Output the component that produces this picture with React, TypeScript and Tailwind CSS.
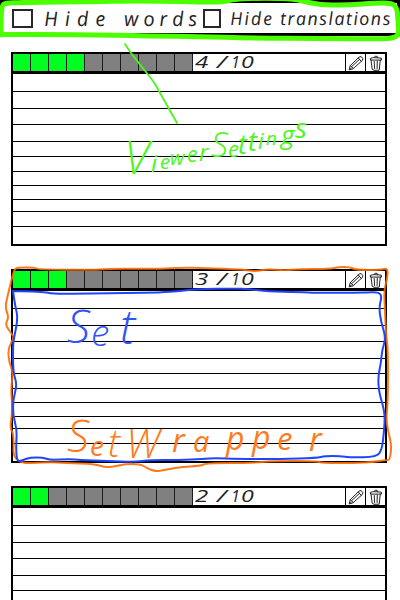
import React from "react";

type Glyph = [char: string, x: number, y: number, size: number];
type Point = [x: number, y: number];

const ROW_HEIGHTS = [
  "h-[18px]", "h-[17px]", "h-[16px]", "h-[17px]", "h-[15px]", "h-[15px]",
  "h-[14px]", "h-[14px]", "h-[12px]", "h-[15px]",
];

/* Smooth freehand stroke through a list of points. */
function stroke(points: Point[]) {
  let d = `M${points[0][0]} ${points[0][1]}`;
  for (let i = 1; i < points.length - 1; i++) {
    const [x, y] = points[i];
    const [nx, ny] = points[i + 1];
    d += ` Q${x} ${y} ${(x + nx) / 2} ${(y + ny) / 2}`;
  }
  const last = points[points.length - 1];
  return `${d} L${last[0]} ${last[1]}`;
}

/* Letters set one by one; large capitals get the light weight so the pen width stays even. */
function Lettering({ glyphs, color, stretch = 1 }: {
  glyphs: Glyph[]; color: string; stretch?: number;
}) {
  return (
    <text
      fill={color}
      fontFamily='"Open Sans", sans-serif'
      fontStyle="italic"
      transform={`scale(${stretch} 1)`}
    >
      {glyphs.map(([char, x, y, size], i) => (
        <tspan key={i} x={x / stretch} y={y} fontSize={size} fontWeight={size > 32 ? 300 : 400}>{char}</tspan>
      ))}
    </text>
  );
}

function Pencil() {
  return (
    <svg width="16" height="16" viewBox="0 0 16 16" fill="none" stroke="#222" strokeWidth="1" strokeLinejoin="round" strokeLinecap="round">
      <path d="M1.3 14.5 2.2 10.7 11.2 2 13.2 1.6 14.9 3.7 14.3 5.5 5.2 13.6Z" />
      <path d="M2.2 10.7 3.9 12 5.2 13.6M10.3 3 13.2 6.3M3.7 11.6 11.6 4.3M1.5 14 3 13.8" />
    </svg>
  );
}

function Trash() {
  return (
    <svg width="14" height="16" viewBox="0 0 14 16" fill="none" stroke="#222" strokeWidth="1" strokeLinejoin="round" strokeLinecap="round">
      <path d="M1.5 4.7 1.2 3.4 4.5 2.6 12.3 3.1 12.5 4.7ZM5 2.5 6.2 1.2 8.2 1.4 8.7 2.6" />
      <path d="M2 5 3.2 14.3 5 15.3 10.2 15.2 11.3 5M5.2 6.5 5.6 13.5M8.3 6 8.1 13.5" />
    </svg>
  );
}

function SetCard({ done }: { done: number }) {
  return (
    <section className="h-[194px] w-[376px] shrink-0 border-2 border-black bg-white">
      <header className="flex h-5 border-b-[3px] border-black">
        {Array.from({ length: 10 }, (_, i) => (
          <div key={i} className={`w-[18px] shrink-0 border-r border-[#1c1c1c] ${i < done ? "bg-[#00ff21]" : "bg-[#808080]"}`} />
        ))}
        <div className="flex flex-1 pl-[2px] font-['Open_Sans',sans-serif] text-[16px] leading-[17px] text-[#222] italic">
          <span className="inline-block w-[22px]"><span className="inline-block origin-left scale-x-[1.5]">{done}</span></span>
          <span className="inline-block w-[14px]"><span className="inline-block origin-left scale-x-[1.7]">/</span></span>
          <span className="inline-block w-[10px]">1</span>
          <span className="inline-block origin-left scale-x-[1.45]">0</span>
        </div>
        <div className="flex w-5 items-center justify-center border-l border-black"><Pencil /></div>
        <div className="flex w-5 items-center justify-center border-l border-black"><Trash /></div>
      </header>
      {ROW_HEIGHTS.map((height, i) => (
        <div key={i} className={`${height} border-b border-black`} />
      ))}
    </section>
  );
}

const BAR: Point[] = [[1,35],[1,18],[2,5],[6,3],[20,2.5],[60,2],[100,1.5],[120,1],[160,1],[200,2],[222,2],[235,-1],[265,-2],[295,-1],[310,3],[325,5],[350,5],[375,3],[392,3],[397,8],[398,20],[399,34],[394,38],[380,39],[320,38.5],[250,38],[200,36.5],[150,36],[80,34.5],[0,34.5]];

const BLUE_BOX: Point[] = [[13,291],[43,291.5],[53,294],[90,293.5],[128,293],[160,292.5],[180,291],[198,289],[233,288.5],[250,289],[267,291.5],[300,292],[317,293],[365,292.5],[378,292],[382,296],[379,307],[381,322],[386,338],[382,350],[381,363],[378,377],[379,392],[382,402],[385,415],[384,432],[382,449],[377,457],[350,457.5],[340,456],[325,456],[317,458],[280,459],[237,459],[215,458],[203,459],[180,460],[150,460],[135,462],[120,461.5],[95,460.5],[80,460],[70,459],[50,460],[43,457.5],[30,457.5],[23,460],[17,462],[16,447],[17,430],[13,415],[13,400],[17,385],[14,375],[13,365],[13,345],[14,338],[18,318],[15,305],[13,291]];

const ORANGE_BOX: Point[] = [[12,278],[14,270],[17,267.5],[35,267.5],[38,269.5],[97,270],[110,268.5],[160,269],[180,267.5],[205,268],[243,269.5],[255,271.5],[267,269],[285,270.5],[300,269],[330,269],[338,267],[350,267],[356,270],[380,270],[388,268],[387,280],[384,290],[385,310],[386,335],[388,350],[388,400],[386,420],[389,435],[391.5,445],[390,460],[386,460],[373,462],[355,463],[322,463],[316,461],[274,461],[250,463],[207,463],[200,466],[180,467],[165,470],[155,471.5],[147,468],[140,464],[125,464],[115,466.5],[105,467.5],[95,464],[65,463],[50,462],[13,464],[14,435],[10,428],[12,415],[12,400],[11,390],[13,372],[9,362],[8,348],[14,338],[12,334],[5,325],[9,317],[5,308],[8,294],[12,278]];

const VIEWER_SETTINGS: Glyph[] = [
  ["V",124,174,46],["i",151,172,24],["e",160,169,20],["w",170,165,20],["e",187,162,21],["r",199,161,24],[" ",206,160,10],
  ["S",211,157,34],["e",228,157,22],["t",238,154,27],["t",248,151,27],["i",258,149,22],["n",266,145,19],["g",281,144,26],["s",295,138,28],
];
const SET: Glyph[] = [["S",67,343,46],["e",91,346,37],["t",120,344,48]];
const SET_WRAPPER: Glyph[] = [
  ["S",67,452,44],["e",90,456,28],["t",108,457,38],["W",126,458,40],["r",172,452,32],["a",193,452,29],
  ["p",226,450,32],["p",252,449,32],["e",277,450,31],["r",309,451,32],
];

export default function App() {
  return (
    <main className="relative h-[600px] w-[400px] overflow-hidden bg-white">
      <div className="flex h-9 border-[3px] border-black bg-white font-['Open_Sans',sans-serif] font-medium text-[#222] italic">
        <label className="flex w-[188px] shrink-0 items-start pt-[5px] pl-[9px]">
          <span className="mt-px h-[19px] w-[21px] shrink-0 border-2 border-[#282828]" />
          <span className="flex h-[21px] w-[157px] shrink-0 skew-x-[4deg] pl-[11px] text-[20px] leading-[21px]">
            <span className="w-[80px] shrink-0 tracking-[7px]">Hide</span>
            <span className="tracking-[4.8px]">words</span>
          </span>
        </label>
        <label className="flex flex-1 items-start pt-[6px] pl-[12px]">
          <span className="h-[19px] w-[18px] shrink-0 border-2 border-[#282828]" />
          <span className="flex h-[20px] shrink-0 skew-x-[4deg] pl-[9px] text-[18px] leading-[19px]">
            <span className="w-[50px] shrink-0 tracking-[2px]">Hide</span>
            <span className="tracking-[1.4px]">translations</span>
          </span>
        </label>
      </div>

      <div className="mt-4 ml-[11px] flex flex-col gap-[23px]">
        <SetCard done={4} />
        <SetCard done={3} />
        <SetCard done={2} />
      </div>

      {/* Marker annotations lie over the wireframe. */}
      <svg className="pointer-events-none absolute inset-0" width="400" height="600" viewBox="0 0 400 600" fill="none" strokeLinecap="round" strokeLinejoin="round">
        <path d={stroke(BAR)} stroke="#4cff00" strokeWidth="5" />
        <path d="M125 44C134 59 148 73 155 84C163 98 170 111 177 123" stroke="#4cf51b" strokeWidth="1.8" />
        <Lettering glyphs={VIEWER_SETTINGS} color="#4cf51b" />
        <path d={stroke(ORANGE_BOX)} stroke="#ff6a00" strokeOpacity="0.9" strokeWidth="2" />
        <path d={stroke(BLUE_BOX)} stroke="#1f45ff" strokeWidth="2" />
        <Lettering glyphs={SET} color="#3155f5" />
        <Lettering glyphs={SET_WRAPPER} color="#ff7a20" />
      </svg>
    </main>
  );
}
